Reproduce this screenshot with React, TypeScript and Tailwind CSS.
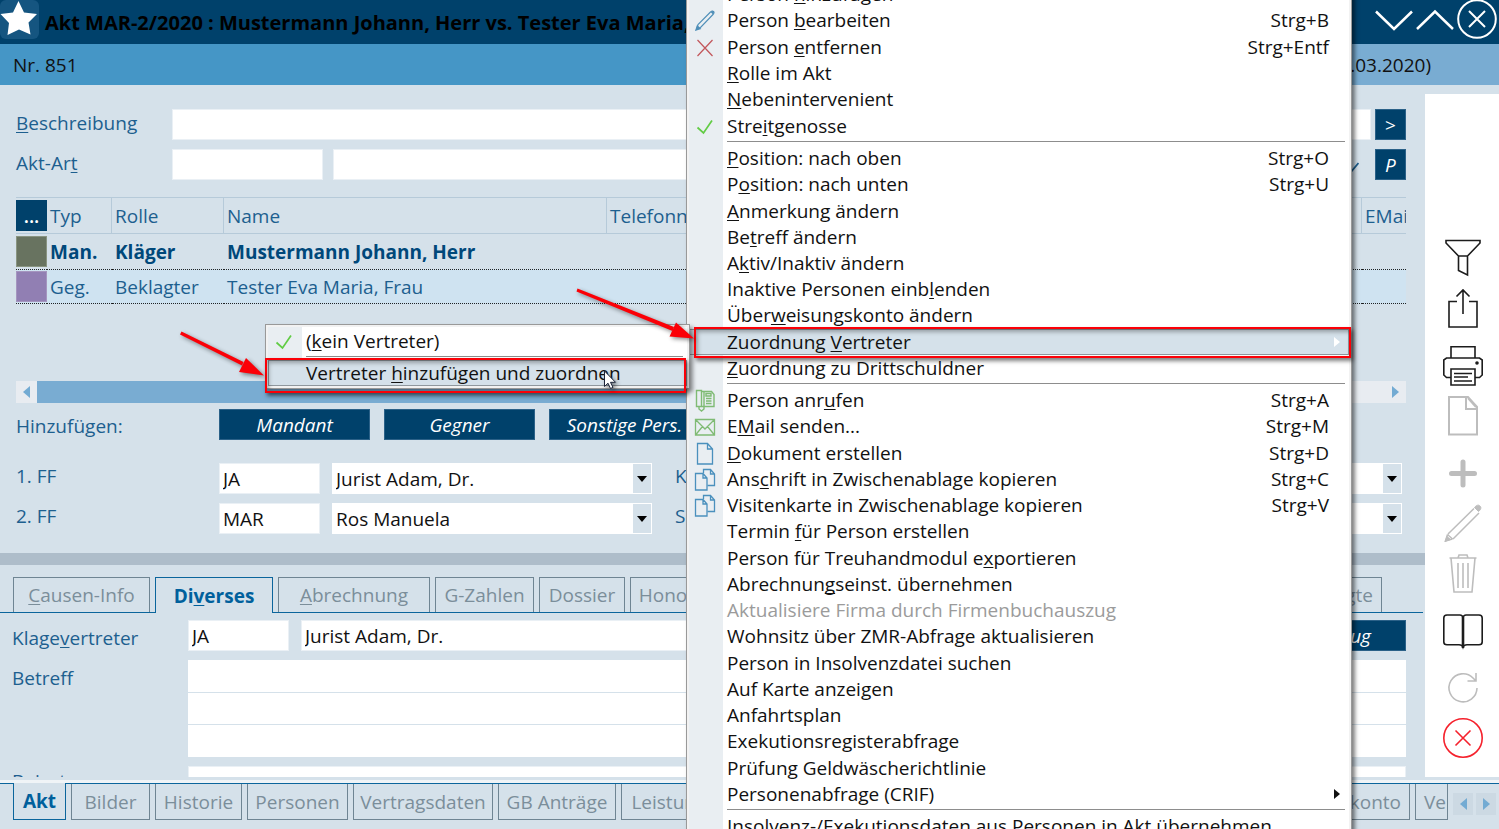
import React from "react";

/* Renders a caption in which "&" marks the underlined access key. */
function Caption({ text }: { text: string }) {
  const i = text.indexOf("&");
  if (i < 0) return <>{text}</>;
  return (
    <>
      {text.slice(0, i)}
      <u className="decoration-1 underline-offset-2 [text-decoration-skip-ink:none]">{text[i + 1]}</u>
      {text.slice(i + 2)}
    </>
  );
}

type IconName = "pencil" | "cross" | "check" | "phone" | "mail" | "doc" | "copy";

function MenuIcon({ name }: { name: IconName }) {
  const common = { width: 24, height: 24, viewBox: "0 0 24 24", fill: "none", "aria-hidden": true } as const;
  switch (name) {
    case "pencil":
      return (
        <svg {...common} stroke="#4f8fb8" strokeWidth="1.1">
          <path d="M3.5 21.5 5 16.5 17.5 4c1-1 2-1.500 3-.5s.5 2-.5 3L7.500 19.500z" />
          <path d="m3.500 21.500 1-3 2 2zM18.500 3.500l2 2" strokeWidth="2" />
        </svg>
      );
    case "cross":
      return (
        <svg {...common} stroke="#c2555a" strokeWidth="1.2">
          <path d="m4.500 5 15 16M19.500 5l-15 16" />
        </svg>
      );
    case "check":
      return (
        <svg {...common} stroke="#62cc45" strokeWidth="1.7">
          <path d="m4.500 13.500 6 5.500L19 6.500" />
        </svg>
      );
    case "phone":
      return (
        <svg {...common} stroke="#7fbb74" strokeWidth="1.4">
          <path d="M3.500 2.500h5v16h-5zM8.500 3.500h10l2.500 3v12H8.500M11 4v14" />
          <path d="M13 5.500h5v2.500h-5zM13 10.500h5.500M13 13h5.500M13 15.500h5.500" />
          <path d="M6 19v2l2.500 2 2.500-2v-2" />
        </svg>
      );
    case "mail":
      return (
        <svg {...common} stroke="#7fbb74" strokeWidth="1.3">
          <path d="M2.500 5.500h19v15.500h-19zM2.500 5.500 12 15l9.500-9.500M2.500 21l7-8.500M21.500 21l-7-8.500" />
        </svg>
      );
    case "doc":
      return (
        <svg {...common} stroke="#4a90bd" strokeWidth="1.3">
          <path d="M4.500 2.500h10l5 5.500v15h-15zM14.500 2.500V8h5" />
        </svg>
      );
    case "copy":
      return (
        <svg {...common} stroke="#4a90bd" strokeWidth="1.3">
          <path d="M2.500 6.500h7.500l4 4.500v12H2.500zM10 6.500V11h4" />
          <path d="M10.500 6V2.500h7l4 4.500v11.500h-7M17.500 2.500V7h4" />
        </svg>
      );
  }
}

type Item = {
  text: string;
  keys?: string;
  icon?: IconName;
  active?: boolean;
  disabled?: boolean;
  sub?: boolean;
};

const sectionOne: Item[] = [
  { text: "Person &hinzufügen" },
  { text: "Person &bearbeiten", keys: "Strg+B", icon: "pencil" },
  { text: "Person &entfernen", keys: "Strg+Entf", icon: "cross" },
  { text: "&Rolle im Akt" },
  { text: "&Nebenintervenient" },
  { text: "Stre&itgenosse", icon: "check" },
];

const sectionTwo: Item[] = [
  { text: "&Position: nach oben", keys: "Strg+O" },
  { text: "P&osition: nach unten", keys: "Strg+U" },
  { text: "&Anmerkung ändern" },
  { text: "Be&treff ändern" },
  { text: "A&ktiv/Inaktiv ändern" },
  { text: "Inaktive Personen einb&lenden" },
  { text: "Über&weisungskonto ändern" },
  { text: "Zuordnung &Vertreter", active: true, sub: true },
  { text: "&Zuordnung zu Drittschuldner" },
];

const sectionThree: Item[] = [
  { text: "Person anr&ufen", keys: "Strg+A", icon: "phone" },
  { text: "E&Mail senden...", keys: "Strg+M", icon: "mail" },
  { text: "&Dokument erstellen", keys: "Strg+D", icon: "doc" },
  { text: "Ans&chrift in Zwischenablage kopieren", keys: "Strg+C", icon: "copy" },
  { text: "Visitenkarte in Zwischenablage kopieren", keys: "Strg+V", icon: "copy" },
  { text: "Termin &für Person erstellen" },
  { text: "Person für Treuhandmodul e&xportieren" },
  { text: "Abrechnun&gseinst. übernehmen" },
  { text: "Aktualisiere Firma durch Firmenbuchauszug", disabled: true },
  { text: "Wohnsitz über ZMR-Abfrage aktualisieren" },
  { text: "Person in Insolvenzdatei suchen" },
  { text: "Auf Karte anzeigen" },
  { text: "Anfahrtsplan" },
  { text: "Exekutionsregisterabfrage" },
  { text: "Prüfung Geldwäscherichtlinie" },
  { text: "Personenabfrage (CRIF)", sub: true },
];

function MenuRow({ item }: { item: Item }) {
  return (
    <button
      type="button"
      role="menuitem"
      disabled={item.disabled}
      className={
        "flex min-h-0 w-full items-center text-left leading-6 " +
        (item.active ? "bg-[#d5e1ea] outline outline-1 -outline-offset-1 outline-[#8f979d] " : "") +
        (item.disabled ? "text-[#9b9b9b]" : "text-[#111]")
      }
    >
      <span className="flex h-6 w-[38px] shrink-0 items-center pl-[4px]">{item.icon && <MenuIcon name={item.icon} />}</span>
      <span className="flex-1 whitespace-nowrap">
        <Caption text={item.text} />
      </span>
      {item.keys && <span className="pr-5">{item.keys}</span>}
      {item.sub && (
        <svg width="6" height="10" viewBox="0 0 6 10" className="mr-[9px]" aria-hidden="true">
          <path d="M0 0v10l6-5z" fill={item.active ? "#fff" : "#111"} />
        </svg>
      )}
    </button>
  );
}

function Separator() {
  return (
    <div role="separator" className="h-[6px] pt-[2px] pr-1 pl-[38px]">
      <div className="h-px bg-[#8d8d8d]" />
    </div>
  );
}

function ContextMenu() {
  return (
    <div
      role="menu"
      className="absolute -top-[20px] left-[686px] z-10 w-[666px] border border-[#999] bg-[#f2f2f2] px-[2px] shadow-[3px_3px_4px_rgba(0,0,0,0.5)]"
    >
      <div className="bg-[linear-gradient(to_right,#e9eef2_34px,#fff_34px)]">
        <div className="grid h-[158px] auto-rows-fr">
          {sectionOne.map((m) => <MenuRow key={m.text} item={m} />)}
        </div>
        <Separator />
        <div className="grid h-[236px] auto-rows-fr">
          {sectionTwo.map((m) => <MenuRow key={m.text} item={m} />)}
        </div>
        <Separator />
        <div className="grid h-[420px] auto-rows-fr">
          {sectionThree.map((m) => <MenuRow key={m.text} item={m} />)}
        </div>
        <Separator />
        <div className="pt-px">
          <MenuRow item={{ text: "Insolvenz-/Exekutionsdaten aus Personen in Akt übernehmen" }} />
        </div>
      </div>
    </div>
  );
}

function SubMenu() {
  return (
    <div
      role="menu"
      className="absolute top-[324px] left-[265px] z-20 w-[425px] border border-[#999] bg-[#f2f2f2] p-[2px] shadow-[3px_3px_4px_rgba(0,0,0,0.4)]"
    >
      <div className="bg-[linear-gradient(to_right,#e9eef2_34px,#fff_34px)]">
        <button type="button" role="menuitem" className="flex h-[27px] w-full items-center text-left text-[#111]">
          <span className="w-[38px] pl-[4px]"><MenuIcon name="check" /></span>
          <span className="whitespace-nowrap"><Caption text="(&kein Vertreter)" /></span>
        </button>
        <Separator />
        <button
          type="button"
          role="menuitem"
          className="flex h-[26px] w-full items-center bg-[#d5e1ea] pl-[38px] text-left text-[#111] outline outline-1 -outline-offset-1 outline-[#8f979d]"
        >
          <span className="whitespace-nowrap"><Caption text="Vertreter &hinzufügen und zuordnen" /></span>
        </button>
      </div>
    </div>
  );
}

/* Red frames, arrows and the mouse pointer that lie over the menus. */
function Annotations() {
  return (
    <>
      <div className="pointer-events-none absolute top-[327px] left-[694px] z-30 h-[31px] w-[657px] border-2 border-[#fb0007] shadow-[2px_3px_4px_rgba(0,0,0,0.5),inset_2px_3px_4px_rgba(0,0,0,0.3)]" />
      <div className="pointer-events-none absolute top-[358px] left-[265px] z-30 h-[35px] w-[421px] border-2 border-[#fb0007] shadow-[2px_3px_4px_rgba(0,0,0,0.5),inset_2px_3px_4px_rgba(0,0,0,0.3)]" />
      <svg
        width="560"
        height="120"
        viewBox="160 280 560 120"
        className="pointer-events-none absolute top-[280px] left-[160px] z-40 drop-shadow-[2px_2px_2px_rgba(0,0,0,0.45)]"
        aria-hidden="true"
      >
        <g fill="#fb0007" stroke="none">
          <path d="M181.500 331.500 243.500 362l-1.500 3.500L180 334.500z" />
          <path d="M246 358 264 375.500l-25-3.500z" />
          <path d="M577.500 288.500 674 327l-1.500 4L576.500 291.500z" />
          <path d="M676 322.500 694 338.500l-24.500-2z" />
        </g>
        <path d="M604.500 371v15.500l3.500-3.300 2.500 5.300 2.500-1.100-2.500-5.100h5z" fill="#fff" stroke="#1b2338" />
      </svg>
    </>
  );
}

const label = "text-[#1d5f8f]";
const field = "h-[31px] min-w-0 border border-[#eaf0f5] bg-white px-[3px] text-[#111] outline-none";
const darkButton = "h-[31px] shrink-0 border border-[#2b6188] bg-[#00416b] text-white italic";

function Combo({ id, value, name, className }: { id?: string; value: string; name: string; className: string }) {
  return (
    <div className={"relative " + className}>
      <select
        id={id}
        aria-label={name}
        defaultValue={value}
        className="h-[31px] w-full appearance-none border border-white bg-white px-[3px] text-[#111] outline-none"
      >
        <option>{value}</option>
      </select>
      <span className="pointer-events-none absolute top-px right-px flex h-[29px] w-[18px] items-center justify-center bg-[#d5e1ea]">
        <svg width="10" height="6" viewBox="0 0 10 6" aria-hidden="true"><path d="M0 0h10L5 6z" fill="#000" /></svg>
      </span>
    </div>
  );
}

function LeadRow({ id, caption, code, person, other }: { id: string; caption: string; code: string; person: string; other: string }) {
  return (
    <div className="flex pr-[4px]">
      <label htmlFor={id} className={"w-[203px] shrink-0 leading-[26px] " + label}>{caption}</label>
      <input id={id} defaultValue={code} className={"w-[101px] shrink-0 " + field} />
      <Combo name={caption + " Name"} value={person} className="ml-[12px] w-[320px] shrink-0" />
      <label htmlFor={id + "-o"} className={"ml-[23px] w-[200px] shrink-0 leading-[26px] " + label}>{other}</label>
      <Combo id={id + "-o"} name={other} value="" className="flex-1" />
    </div>
  );
}

function Triangle({ left }: { left?: boolean }) {
  return (
    <svg width="7" height="12" viewBox="0 0 7 12" aria-hidden="true">
      <path d={left ? "M7 0v12L0 6z" : "M0 0v12l7-6z"} fill="#73abd3" />
    </svg>
  );
}

function PersonTable() {
  const th = "border-y border-r border-[#b6cad9] pl-[3px] text-left font-normal";
  return (
    <table className={"mt-[17px] w-full table-fixed border-separate border-spacing-0 " + label}>
      <colgroup>
        <col className="w-[31px]" />
        <col className="w-[65px]" />
        <col className="w-[112px]" />
        <col className="w-[383px]" />
        <col />
        <col className="w-[44px]" />
      </colgroup>
      <thead>
        <tr className="h-[37px]">
          <th className="border-y border-[#b6cad9] p-0">
            <button type="button" aria-label="Spalten" className="block h-[31px] w-[31px] bg-[#00416b] leading-6 font-semibold text-white">...</button>
          </th>
          <th className={th}>Typ</th>
          <th className={th}>Rolle</th>
          <th className={th}>Name</th>
          <th className={th}>Telefonnummer</th>
          <th className="overflow-hidden border-y border-[#b6cad9] pl-[3px] text-left font-normal whitespace-nowrap">EMail</th>
        </tr>
      </thead>
      <tbody>
        <tr className="h-[35px] font-bold text-[#00487a]">
          <td className="p-0"><div className="h-[31px] w-[31px] border border-[#899481] bg-[#687360]" /></td>
          <td className="pl-[3px]">Man.</td>
          <td className="pl-[3px]">Kläger</td>
          <td className="pl-[3px]">Mustermann Johann, Herr</td>
          <td />
          <td />
        </tr>
        <tr className="h-[35px] bg-[#cfe3f1] [&>td]:border-y [&>td]:border-dotted [&>td]:border-[#222]">
          <td className="p-0"><div className="h-[31px] w-[31px] border border-[#a595bf] bg-[#917fb3]" /></td>
          <td className="pl-[3px]">Geg.</td>
          <td className="pl-[3px]">Beklagter</td>
          <td className="pl-[3px]">Tester Eva Maria, Frau</td>
          <td />
          <td />
        </tr>
      </tbody>
    </table>
  );
}

const idleTab = "shrink-0 overflow-hidden whitespace-nowrap border-[#6f8593] text-[#7b8e9a]";

function MiddleTabs() {
  const t = idleTab + " h-[35px] border-x border-t ";
  return (
    <div role="tablist" className="mt-[12px] mr-[2px] flex gap-[5px] border-b border-[#0b659c] pl-[13px]">
      <button type="button" role="tab" className={t + "w-[137px]"}><Caption text="&Causen-Info" /></button>
      <button type="button" role="tab" aria-selected="true" className="-mb-px h-[36px] w-[118px] shrink-0 border-x border-t border-[#0b659c] bg-[#d5e1ea] font-bold text-[#00609c]">
        <Caption text="Di&verses" />
      </button>
      <button type="button" role="tab" className={t + "w-[152px]"}><Caption text="&Abrechnung" /></button>
      <button type="button" role="tab" className={t + "w-[99px]"}>G-Zahlen</button>
      <button type="button" role="tab" className={t + "w-[86px]"}>Dossier</button>
      <button type="button" role="tab" className={t + "w-[92px]"}>Honorar</button>
      <div className="flex-1" />
      <button type="button" role="tab" className={t + "mr-[41px] w-[170px] pr-2 text-right"}>Bevollmächtigte</button>
    </div>
  );
}

function BottomTabs() {
  const t = idleTab + " h-[36px] border-x border-b ";
  return (
    <div className="shrink-0 pt-[3px]">
      <div className="h-[3px] bg-[#f0f4f7]" />
      <div className="flex h-[46px] gap-[5px] border-t border-[#0b659c] pl-[13px]">
        <button type="button" className="-mt-px h-[37px] w-[53px] shrink-0 border-x border-b border-[#0b659c] bg-[#d5e1ea] font-bold text-[#00609c]">Akt</button>
        <button type="button" className={t + "w-[79px]"}>Bilder</button>
        <button type="button" className={t + "w-[87px]"}>Historie</button>
        <button type="button" className={t + "w-[101px]"}>Personen</button>
        <button type="button" className={t + "w-[140px]"}>Vertragsdaten</button>
        <button type="button" className={t + "w-[118px]"}>GB Anträge</button>
        <button type="button" className={t + "w-[118px]"}>Leistungen</button>
        <div className="flex-1" />
        <button type="button" className={t + "w-[150px] pr-2 text-right"}>Treuhandkonto</button>
        <button type="button" className={t + "w-[33px] pl-2 text-left"}>Verlauf</button>
        <div className="flex gap-[3px] pt-[9px] pr-[3px]">
          <button type="button" aria-label="Zurück" className="flex h-[22px] w-[20px] items-center justify-center bg-[#ccd9e3]"><Triangle left /></button>
          <button type="button" aria-label="Weiter" className="flex h-[22px] w-[20px] items-center justify-center bg-[#ccd9e3]"><Triangle /></button>
        </div>
      </div>
    </div>
  );
}

function Tool({ name, children }: { name: string; children: React.ReactNode }) {
  return (
    <button type="button" aria-label={name} className="block h-10 w-10">
      <svg width="40" height="40" viewBox="0 0 40 40" fill="none" stroke="#1c1c1c" strokeWidth="1.600" aria-hidden="true">
        {children}
      </svg>
    </button>
  );
}

function Toolbar() {
  const g = "#bdbdbd";
  return (
    <aside className="mt-[9px] flex w-[74px] shrink-0 flex-col items-center gap-[18px] bg-white pt-[144px] pl-[2px]">
      <div className="flex flex-col gap-[10px]">
        <Tool name="Filter">
          <path d="M3 2.500h34v2.500L24.500 18h-9L3 5zM15.500 18v14.500l9 4.500V18" />
        </Tool>
        <Tool name="Teilen">
          <path d="M14 13.500H6V39h28V13.500h-8M20 26V2.500M13.500 8.500 20 2l6.500 6.500" />
        </Tool>
      </div>
      <div className="flex flex-col gap-[10px]">
        <Tool name="Drucken">
          <path d="M8 12V.8h24V12M8 31.500H3.500L.8 29V14l2.700-2h33l2.700 2v15l-2.700 2.500H32" />
          <path d="M8 23h24v16H8zM11 27.500h18M11 31h14M11 35h18" />
          <circle cx="34" cy="17" r="1" fill="#1c1c1c" />
        </Tool>
        <Tool name="Neu">
          <path d="M6 1h19l9 10v27.500H6zM23 1v12h11M25 2l8 9" stroke={g} strokeWidth="2" />
        </Tool>
      </div>
      <div className="flex flex-col gap-[10px]">
        <Tool name="Hinzufügen">
          <path d="M20 8v23M8.500 19.500h23" stroke={g} strokeWidth="5" strokeLinecap="round" />
        </Tool>
        <Tool name="Bearbeiten">
          <path d="M5 30 31 4.500M10 35 36 9M4.500 30.500l5 4.500M4.500 30.500 2.500 37l7-2" stroke={g} strokeWidth="1.500" />
          <path d="M31.500 3.500c2-2.500 4-3 5.500-1.500s1 3.500-1.500 5.500zM4 32.500 2 37.500l5.500-2z" fill={g} stroke={g} strokeWidth="1" />
        </Tool>
        <Tool name="Löschen">
          <path d="M6.500 4h27M15 4l1-3h8l1 3M8 4l3 34h18l3-34M15 9v25M20 9v25M25 9v25" stroke={g} strokeWidth="1.600" />
        </Tool>
      </div>
      <div className="flex flex-col gap-[16px]">
        <Tool name="Buch">
          <path d="M20 5.500C19.500 3.800 18.500 3 17 3H4C2 3 .8 4 .8 6v24c0 2 1.200 2.800 3.200 2.800h12c2 0 3.500.5 4 2.200.5-1.700 2-2.200 4-2.200h12c2 0 3.200-.8 3.200-2.800V6c0-2-1.200-3-3.200-3H23c-1.500 0-2.500.8-3 2.500z" />
          <path d="M20 5v31" strokeWidth="2.600" />
        </Tool>
        <div className="flex flex-col gap-[10px]">
          <Tool name="Aktualisieren">
            <path d="M34 20A14 14 0 1 1 30 10l3 3M33 5v8h-8.500" stroke={g} strokeWidth="1.600" />
          </Tool>
          <Tool name="Schließen">
            <circle cx="20" cy="20" r="19.200" stroke="#f5222d" />
            <path d="m12.500 12.500 15 15M27.500 12.500l-15 15" stroke="#f5222d" />
          </Tool>
        </div>
      </div>
    </aside>
  );
}

export default function App() {
  return (
    <div className="relative flex h-screen flex-col overflow-hidden bg-[#d5e1ea] font-['Open_Sans','Noto_Sans',sans-serif] text-[19px] leading-[26px]">
      <header className="flex h-[44px] shrink-0 items-start justify-between bg-[#00416b]">
        <div className="flex min-w-0">
          <button type="button" aria-label="Favorit" className="h-[39px] w-[39px] shrink-0 rounded-md bg-[#155580]">
            <svg width="39" height="39" viewBox="0 0 39 39" aria-hidden="true">
              <path d="M18.500 1 24 12.500 37 14l-8.500 8.500 2 12-11.500-5-11.500 5.500L9 23 .500 14 13 12.500z" fill="#fff" />
            </svg>
          </button>
          <h1 className="pt-[10px] pl-[6px] text-[20px] font-bold whitespace-nowrap text-black">Akt MAR-2/2020 : Mustermann Johann, Herr vs. Tester Eva Maria, Frau</h1>
        </div>
        <div className="flex gap-[3px] pr-[2px]">
          <button type="button" aria-label="Nach unten">
            <svg width="38" height="39" viewBox="0 0 38 39" fill="none" stroke="#fff" strokeWidth="2.500" aria-hidden="true"><path d="m1 11.500 18 17.500 18-17.500" /></svg>
          </button>
          <button type="button" aria-label="Nach oben">
            <svg width="38" height="39" viewBox="0 0 38 39" fill="none" stroke="#fff" strokeWidth="2.500" aria-hidden="true"><path d="M1 29 19 11.500 37 29" /></svg>
          </button>
          <button type="button" aria-label="Akt schließen">
            <svg width="40" height="39" viewBox="0 0 40 39" fill="none" stroke="#fff" strokeWidth="2" aria-hidden="true">
              <circle cx="20" cy="19" r="18.800" />
              <path d="m12 11 16 16M28 11 12 27" />
            </svg>
          </button>
        </div>
      </header>
      <div className="flex h-[41px] shrink-0 items-center bg-[linear-gradient(to_right,#4596c6_60%,#79acd2_60%)] pr-[68px] pl-[13px] text-[#111]">
        <span>Nr. 851</span>
        <span className="ml-auto">(02.03.2020)</span>
      </div>

      <div className="flex min-h-0 flex-1">
        <main className="flex min-w-0 flex-1 flex-col overflow-hidden">
          <section className="pt-[24px] pr-[19px] pl-[16px]">
            <div className="flex">
              <label htmlFor="desc" className={"w-[156px] shrink-0 leading-[28px] " + label}><Caption text="&Beschreibung" /></label>
              <input id="desc" className={"flex-1 " + field} />
              <button type="button" className={"ml-[4px] w-[31px] not-italic " + darkButton}>&gt;</button>
            </div>
            <div className="mt-[9px] flex">
              <label htmlFor="kind" className={"w-[156px] shrink-0 leading-[28px] " + label}><Caption text="Akt-Ar&t" /></label>
              <input id="kind" className={"w-[151px] shrink-0 " + field} />
              <input aria-label="Akt-Art Bezeichnung" className={"ml-[10px] w-[600px] " + field} />
              <span className="flex-1" />
              <svg width="22" height="31" viewBox="0 0 22 31" fill="none" stroke="#1d5f8f" strokeWidth="1.800" className="mr-[16px]" aria-hidden="true"><path d="m8 18 5 6 8.500-10" /></svg>
              <button type="button" className={"w-[31px] " + darkButton}>P</button>
            </div>
            <PersonTable />
            <div className="mt-[77px] flex h-[22px] bg-[#e8ecf1]">
              <button type="button" aria-label="Nach links" className="flex w-[21px] items-center justify-center"><Triangle left /></button>
              <div className="w-[900px] bg-[#79acd2]" />
              <div className="flex-1" />
              <button type="button" aria-label="Nach rechts" className="flex w-[21px] items-center justify-center"><Triangle /></button>
            </div>
            <div className="mt-[6px] flex gap-[14px]">
              <span className={"w-[189px] leading-[34px] " + label}>Hinzufügen:</span>
              <button type="button" className={"w-[151px] " + darkButton}>Mandant</button>
              <button type="button" className={"w-[151px] " + darkButton}>Gegner</button>
              <button type="button" className={"w-[151px] " + darkButton}>Sonstige Pers.</button>
            </div>
            <div className="mt-[20px] flex flex-col gap-[9px]">
              <LeadRow id="ff1" caption="1. FF" code="JA" person="Jurist Adam, Dr." other="Kanzlei" />
              <LeadRow id="ff2" caption="2. FF" code="MAR" person="Ros Manuela" other="Sekretariat" />
            </div>
          </section>
          <div className="mt-[19px] h-[12px] shrink-0 bg-[#aebdca]" />
          <MiddleTabs />
          <section className="flex flex-col gap-[9px] pt-[7px] pr-[19px] pl-[12px]">
            <div className="flex">
              <label htmlFor="rep" className={"w-[176px] shrink-0 pt-[5px] " + label}><Caption text="Klage&vertreter" /></label>
              <input id="rep" defaultValue="JA" className={"w-[101px] shrink-0 " + field} />
              <input aria-label="Klagevertreter Name" defaultValue="Jurist Adam, Dr." className={"ml-[12px] flex-1 " + field} />
              <button type="button" className={"ml-[12px] w-[150px] pr-[34px] text-right " + darkButton}>Auszug</button>
            </div>
            <div className="flex">
              <label htmlFor="subject" className={"w-[176px] shrink-0 pt-[5px] " + label}>Betreff</label>
              <div className="flex min-w-0 flex-1 flex-col divide-y divide-[#d5e1ea] bg-white">
                <input id="subject" className="h-[33px] px-[3px] outline-none" />
                <input aria-label="Betreff Zeile 2" className="h-8 px-[3px] outline-none" />
                <input aria-label="Betreff Zeile 3" className="h-8 px-[3px] outline-none" />
              </div>
            </div>
            <div className="flex">
              <label htmlFor="note" className={"w-[176px] shrink-0 pt-[2px] " + label}>Beisatz</label>
              <input id="note" className={"flex-1 " + field} />
            </div>
          </section>
        </main>
        <Toolbar />
      </div>
      <BottomTabs />

      <ContextMenu />
      <SubMenu />
      <Annotations />
    </div>
  );
}
